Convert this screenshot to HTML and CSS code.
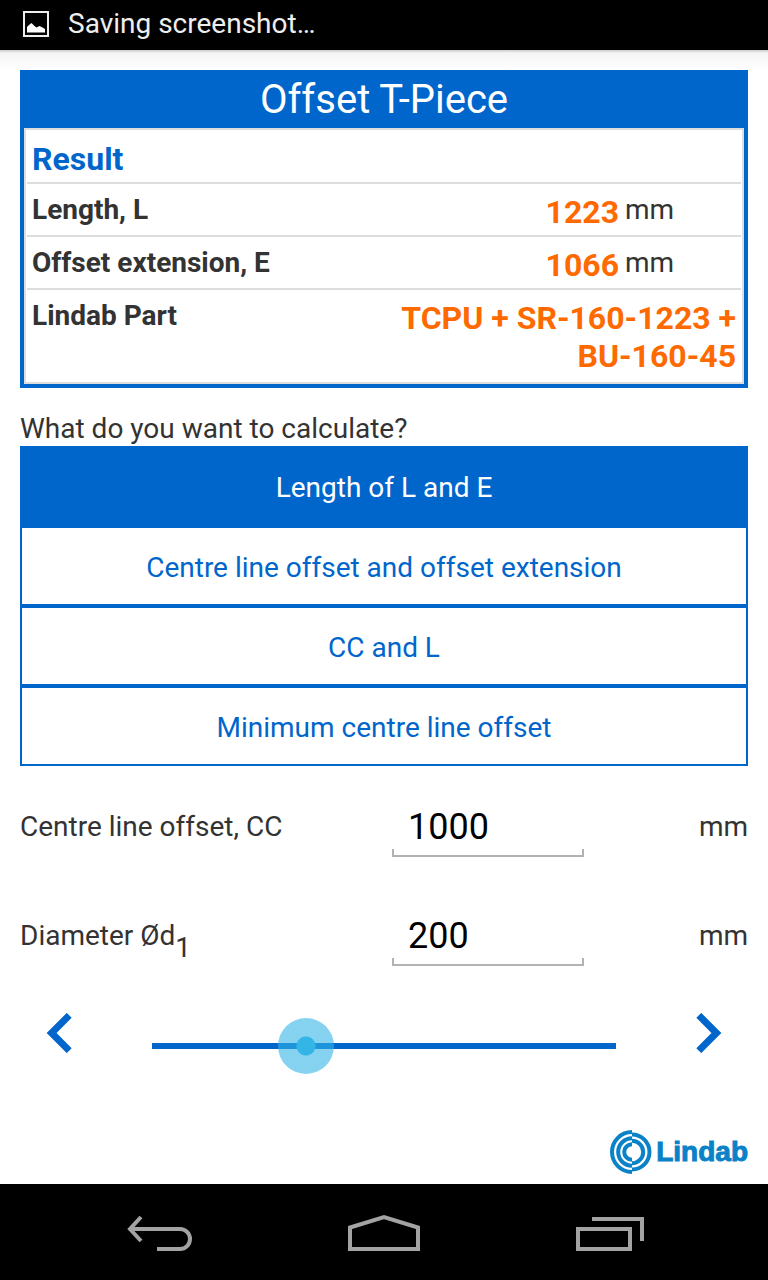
FILE: index.html
```
<!DOCTYPE html>
<html lang="en">
<head>
  <meta charset="UTF-8">
  <title>Offset T-Piece</title>
  <meta name="viewport" content="width=device-width, initial-scale=1.0">
  <link rel="stylesheet" href="styles.css">
</head>
<body>

  <header class="status-bar">
    <svg width="26" height="26" viewBox="0 0 26 26" aria-hidden="true">
      <rect x="1" y="1" width="24" height="24" fill="none" stroke="#eee" stroke-width="2"/>
      <path d="M4 21.500V16l2-2 2.500-2 3 3 2 1.500 3-1.500 3 1.500L22 18v3.500z" fill="#fff"/>
    </svg>
    <span>Saving screenshot…</span>
  </header>

  <main class="content">
    <section class="result">
      <h1>Offset T-Piece</h1>
      <table>
        <tr>
          <th class="heading" colspan="3">Result</th>
        </tr>
        <tr>
          <th scope="row">Length, L</th>
          <td class="value">1223</td>
          <td class="unit">mm</td>
        </tr>
        <tr>
          <th scope="row">Offset extension, E</th>
          <td class="value">1066</td>
          <td class="unit">mm</td>
        </tr>
        <tr>
          <th scope="row">Lindab Part</th>
          <td class="part" colspan="2">TCPU + SR-160-1223 + BU-160-45</td>
        </tr>
      </table>
    </section>

    <p class="question">What do you want to calculate?</p>
    <div class="options">
      <button type="button" class="active" aria-pressed="true">Length of L and E</button>
      <button type="button">Centre line offset and offset extension</button>
      <button type="button">CC and L</button>
      <button type="button">Minimum centre line offset</button>
    </div>

    <form class="fields">
      <div class="field">
        <label for="offset">Centre line offset, CC</label>
        <input type="text" id="offset" value="1000">
        <span>mm</span>
      </div>
      <div class="field">
        <label for="diameter">Diameter Ød<sub>1</sub></label>
        <input type="text" id="diameter" value="200">
        <span>mm</span>
      </div>
      <div class="slider">
        <button type="button" aria-label="Smaller diameter">
          <svg width="26" height="40" viewBox="0 0 26 40"><path d="M23.200 2.400L5.600 20l17.600 17.600" fill="none" stroke="#0066cc" stroke-width="7"/></svg>
        </button>
        <input type="range" min="0" max="100" value="31" aria-label="Diameter">
        <button type="button" aria-label="Larger diameter">
          <svg width="26" height="40" viewBox="0 0 26 40"><path d="M2.800 2.400L20.400 20 2.800 37.600" fill="none" stroke="#0066cc" stroke-width="7"/></svg>
        </button>
      </div>
    </form>

    <div class="logo">
      <svg width="42" height="44" viewBox="0 0 42 44" fill="none" stroke="#0a82c8" stroke-width="4" aria-hidden="true">
        <path d="M22 2A20 20 0 0 0 22 42"/>
        <path d="M22 8.200A13.800 13.800 0 0 0 22 35.800"/>
        <path d="M22 14.200A7.800 7.800 0 0 0 22 29.800"/>
        <path d="M22 4.500A17.500 17.500 0 0 1 22 39.500"/>
        <path d="M22 10.800A11.200 11.200 0 0 1 22 33.200"/>
      </svg>
      <span>Lindab</span>
    </div>
  </main>

  <nav class="nav-bar">
    <button type="button" aria-label="Back">
      <svg width="68" height="40" viewBox="0 0 68 40">
        <path d="M5 16h49a10 10 0 0 1 0 20H31M15 4L4 16l11 12" fill="none" stroke="#a3a3a3" stroke-width="4"/>
      </svg>
    </button>
    <button type="button" aria-label="Home">
      <svg width="72" height="40" viewBox="0 0 72 40">
        <path d="M2 36V14.500L36 4l34 10.500V36z" fill="none" stroke="#a3a3a3" stroke-width="4"/>
      </svg>
    </button>
    <button type="button" aria-label="Recent apps">
      <svg width="72" height="40" viewBox="0 0 72 40">
        <path d="M6 16h52v20H6zM20 6h50v22" fill="none" stroke="#a3a3a3" stroke-width="4"/>
      </svg>
    </button>
  </nav>

</body>
</html>
```
FILE: styles.css
```
* {
  margin: 0;
  padding: 0;
  box-sizing: border-box;
}

body {
  min-height: 100vh;
  display: flex;
  flex-direction: column;
  background: #fff;
  color: #333;
  font-family: Roboto, sans-serif;
  font-size: 28px;
  line-height: 36px;
}

button,
input {
  font: inherit;
  border: none;
  background: none;
}

.status-bar {
  display: flex;
  align-items: center;
  gap: 19px;
  height: 50px;
  padding: 0 23px 2px;
  background: #000;
  color: #eee;
}

.content {
  flex: 1;
  display: flex;
  flex-direction: column;
  padding: 20px 20px 10px;
  background: linear-gradient(#ccc, #f4f4f4 3px, #fff 20px) no-repeat top / 100% 20px;
}

.result {
  padding: 0 4px 4px;
  background: #0066cc;
}

.result h1 {
  padding-top: 2px;
  color: #fff;
  font-size: 40px;
  font-weight: normal;
  line-height: 56px;
  text-align: center;
}

.result table {
  width: 100%;
  padding: 0 1px;
  background: #fff;
  border: 2px solid #ddd;
  border-spacing: 0;
}

.result th,
.result td {
  padding: 9px 5px 4px;
  border-bottom: 2px solid #ddd;
  line-height: 34px;
  text-align: left;
  vertical-align: top;
}

.result tr:last-child th,
.result tr:last-child td {
  padding-bottom: 7px;
  border-bottom: none;
}

.result th {
  width: 50%;
}

.result .heading {
  padding-top: 10px;
  color: #0066cc;
  font-size: 32px;
  line-height: 38px;
}

.result .value,
.result .part {
  color: #ff6a00;
  font-size: 32px;
  font-weight: bold;
  line-height: 38px;
  text-align: right;
}

.result .value {
  padding-right: 0;
}

.result .unit {
  width: 122px;
  padding-left: 6px;
}

.question {
  margin-top: 24px;
  line-height: 34px;
}

.options {
  display: flex;
  flex-direction: column;
}

.options button {
  height: 80px;
  padding-top: 4px;
  border: 2px solid #0066cc;
  color: #0066cc;
}

.options .active {
  background: #0066cc;
  color: #fff;
}

.fields {
  margin-top: 31px;
}

.field {
  display: grid;
  grid-template-columns: 372fr 192fr 164fr;
  align-items: center;
  height: 60px;
}

.field + .field {
  margin-top: 49px;
}

.field sub {
  font-size: 28px;
  line-height: 0;
  vertical-align: -12px;
}

/* underline with a short tick at each end */
.field input {
  width: 100%;
  height: 60px;
  padding: 0 16px;
  color: #000;
  font-size: 36px;
  background:
    linear-gradient(#b2b2b2, #b2b2b2) no-repeat left bottom / 2px 8px,
    linear-gradient(#b2b2b2, #b2b2b2) no-repeat right bottom / 2px 8px,
    linear-gradient(#b2b2b2, #b2b2b2) no-repeat left bottom / 100% 2px;
}

.field span {
  text-align: right;
}

.slider {
  display: grid;
  grid-template-columns: 78px 1fr 78px;
  gap: 54px;
  align-items: start;
  margin-top: 47px;
}

.slider button,
.slider svg {
  display: block;
  height: 40px;
  margin: 0 auto;
}

.slider input {
  -webkit-appearance: none;
  appearance: none;
  width: 100%;
  height: 66px;
  background: linear-gradient(#0066cc, #0066cc) no-repeat center / 100% 6px;
}

.slider input::-webkit-slider-thumb {
  -webkit-appearance: none;
  width: 56px;
  height: 56px;
  border-radius: 50%;
  background: radial-gradient(circle, #33b5e5 9px, rgba(51, 181, 229, 0.6) 10px);
}

.logo {
  display: flex;
  justify-content: flex-end;
  align-items: center;
  gap: 4px;
  margin-top: auto;
  color: #0a82c8;
  font-family: "Liberation Sans", sans-serif;
  font-weight: bold;
  -webkit-text-stroke: 1px #0a82c8;
}

.nav-bar {
  display: grid;
  grid-template-columns: repeat(3, 1fr);
  height: 96px;
  padding: 2px 48px 0;
  background: #000;
}

.nav-bar button {
  display: flex;
  justify-content: center;
  align-items: center;
}
```
